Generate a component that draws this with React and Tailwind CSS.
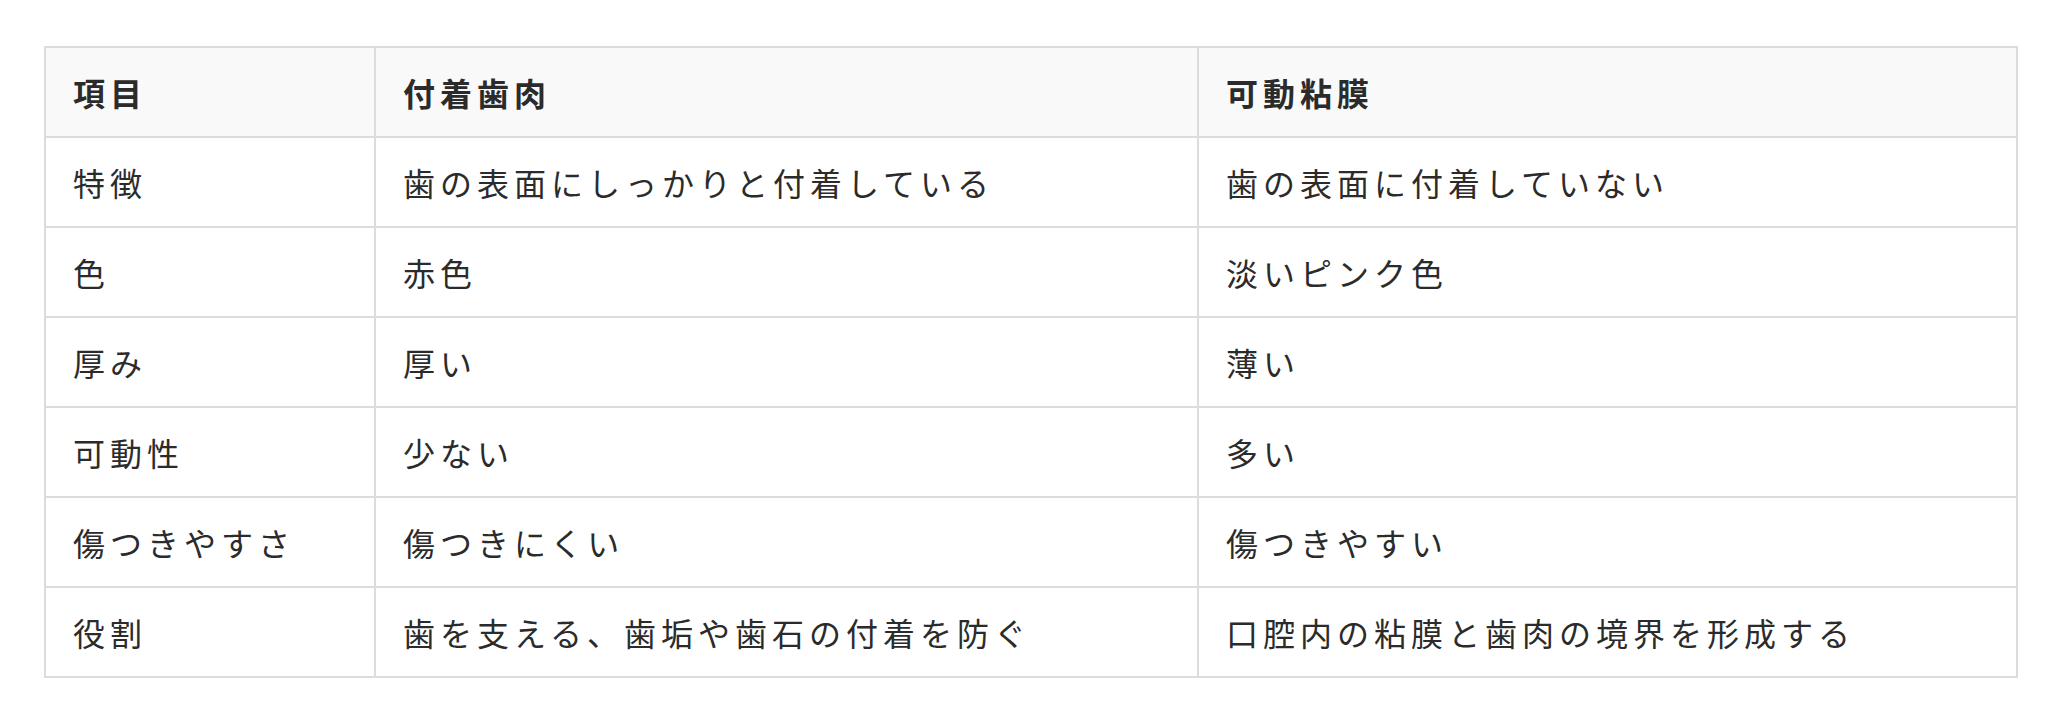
const headers = ["項目", "付着歯肉", "可動粘膜"];

const rows = [
  ["特徴", "歯の表面にしっかりと付着している", "歯の表面に付着していない"],
  ["色", "赤色", "淡いピンク色"],
  ["厚み", "厚い", "薄い"],
  ["可動性", "少ない", "多い"],
  ["傷つきやすさ", "傷つきにくい", "傷つきやすい"],
  ["役割", "歯を支える、歯垢や歯石の付着を防ぐ", "口腔内の粘膜と歯肉の境界を形成する"],
];

function Cell({ children, head }) {
  return (
    <div
      className={`h-[88px] box-content flex items-center pl-[27px] pr-[28px] border-r-2 border-b-2 border-[#dcdcdc] text-[32px] leading-[40px] tracking-[5px] text-[#2b2b2b] ${
        head ? "bg-[#f9f9f9] font-bold" : "bg-white"
      }`}
    >
      {children}
    </div>
  );
}

export default function App() {
  return (
    <div className="w-[2066px] h-[726px] bg-white pt-[46px] pl-[44px] font-['Noto_Sans_CJK_JP','Noto_Sans',sans-serif]">
      <div className="w-[1974px] grid grid-cols-[330px_823px_819px] border-l-2 border-t-2 border-[#dcdcdc]">
        {headers.map((h) => (
          <Cell key={h} head>
            {h}
          </Cell>
        ))}
        {rows.map((r) =>
          r.map((c, i) => <Cell key={r[0] + i}>{c}</Cell>)
        )}
      </div>
    </div>
  );
}
